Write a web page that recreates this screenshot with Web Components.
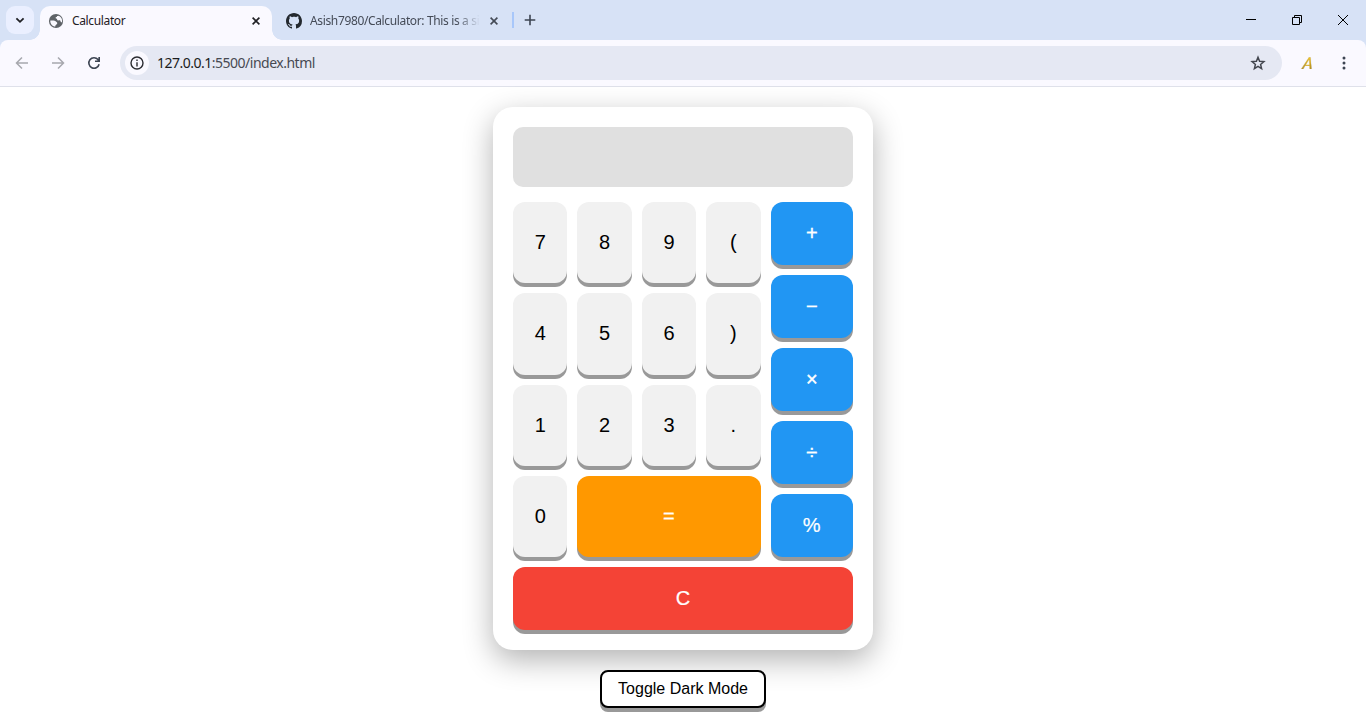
<!DOCTYPE html>
<html lang="en">
<head>
<meta charset="utf-8">
<title>Calculator</title>
<style>
html,body{margin:0;height:100%;background:#fff;overflow:hidden}
</style>
</head>
<body>
<app-window></app-window>
<script>
const define = (name, html) => customElements.define(name, class extends HTMLElement {
  constructor() {
    super();
    const t = document.createElement('template');
    t.innerHTML = html;
    this.attachShadow({ mode: 'open' }).append(t.content.cloneNode(true));
  }
});

define('browser-tab', `
<style>
:host{display:flex;align-items:center;box-sizing:border-box;height:34px;padding:0 10px 5px 8px;color:#444a56;font:12px/16px "Noto Sans","Open Sans",sans-serif}
:host([active]){position:relative;height:34px;background:#faf9ff;border-radius:10px 10px 0 0;color:#1f2024}
:host([active])::before,:host([active])::after{content:"";position:absolute;bottom:0;width:10px;height:10px}
:host([active])::before{left:-10px;background:radial-gradient(circle at 0 0,transparent 9.5px,#faf9ff 10px)}
:host([active])::after{right:-10px;background:radial-gradient(circle at 100% 0,transparent 9.5px,#faf9ff 10px)}
.icon{display:flex;width:16px;height:16px;flex:none}
.title{flex:1;min-width:0;margin-left:8px;white-space:nowrap;overflow:hidden;letter-spacing:var(--track,0)}
:host(:not([active])) .title{-webkit-mask-image:linear-gradient(90deg,#000 calc(100% - 24px),transparent);mask-image:linear-gradient(90deg,#000 calc(100% - 24px),transparent)}
.x{flex:none;width:12px;height:12px;margin-left:8px}
</style>
<span class="icon"><slot name="icon"></slot></span><span class="title"><slot></slot></span>
<svg class="x" viewBox="0 0 12 12"><path d="M2.600 2.600l6.800 6.800M9.400 2.600L2.600 9.400" stroke="currentColor" stroke-width="1.600"/></svg>`);

define('tab-strip', `
<style>
:host{display:flex;align-items:flex-end;height:40px;background:#d7e2f6}
.menu{display:flex;align-items:center;justify-content:center;width:28px;height:28px;margin:0 6px 6px;border-radius:9px;background:#eaefff}
browser-tab{width:232px;box-sizing:border-box}
.second{width:240px;padding-left:14px;padding-right:12px}
.sep{width:2px;height:16px;background:#a8c7fa;margin:0 0 12px}
.plus{width:12px;height:12px;margin:0 0 14px 10px}
.controls{display:flex;margin-left:auto;height:40px}
.controls svg{width:46px;height:40px;fill:none;stroke:#000;stroke-width:1}
svg{display:block}
</style>
<div class="menu"><svg width="12" height="12" viewBox="0 0 12 12"><path d="M2.400 4.300L6 7.800l3.600-3.500" fill="none" stroke="#1f2024" stroke-width="1.800"/></svg></div>
<browser-tab active style="--track:-.36px"><svg slot="icon" width="16" height="16" viewBox="0 0 24 24"><circle cx="12" cy="12" r="10.600" fill="#5f6368"/><path d="M3.500 11.200l5 .2c2.100 0 3 1.500 4.300 2 1.600.7 1.300 2.700.4 3.400-.9.8-2.200.8-2.300 3.600C6.600 20 3 16 3.500 11.200z" fill="#faf9ff"/><path d="M15.200 4.200c-.2 1.400-1.200 1.700-2.800 1.700-1.200 0-1.300 1.800-.2 2.200 1.700.5 1.300 2 2.200 2.800 1.200 1.100 2.800-.7 3.900.5.8.8.4 2 1.200 2.500H21c1.100-4.500-1.700-8.800-5.800-9.700z" fill="#faf9ff"/></svg>Calculator</browser-tab>
<browser-tab class="second" style="--track:-.36px"><svg slot="icon" width="16" height="16" viewBox="0 0 16 16"><path fill="#24292f" d="M8 0C3.580 0 0 3.580 0 8c0 3.540 2.290 6.530 5.470 7.590.4.070.550-.170.550-.380 0-.190-.010-.820-.010-1.490-2.010.370-2.530-.490-2.690-.940-.090-.230-.480-.940-.820-1.130-.280-.150-.680-.520-.010-.530.630-.010 1.080.580 1.230.820.720 1.210 1.870.870 2.330.660.070-.520.280-.870.510-1.070-1.780-.2-3.640-.890-3.640-3.950 0-.870.310-1.590.820-2.150-.080-.2-.360-1.020.080-2.120 0 0 .670-.210 2.200.820.640-.180 1.320-.270 2-.270s1.360.090 2 .270c1.530-1.040 2.200-.820 2.200-.820.440 1.100.160 1.920.080 2.120.510.560.820 1.270.820 2.150 0 3.070-1.870 3.750-3.650 3.950.290.250.540.730.540 1.480 0 1.070-.010 1.930-.010 2.200 0 .210.150.460.550.380A8.010 8.010 0 0 0 16 8c0-4.420-3.580-8-8-8z"/></svg>Asish7980/Calculator: This is a simple</browser-tab>
<div class="sep"></div>
<svg class="plus" viewBox="0 0 12 12"><path d="M6 .7v10.600M.7 6h10.600" stroke="#3c4452" stroke-width="1.600"/></svg>
<div class="controls">
<svg viewBox="0 0 46 40"><path d="M18 19.500h10"/></svg>
<svg viewBox="0 0 46 40"><path d="M18.500 17.500h7v7h-7zM20.500 17.500v-2h7v7h-2"/></svg>
<svg viewBox="0 0 46 40"><path d="M18 15l10 10M28 15L18 25"/></svg>
</div>`);

define('tool-bar', `
<style>
:host{display:block;background:#d7e2f6;font-family:"Noto Sans","Open Sans",sans-serif}
.bar{display:flex;align-items:center;box-sizing:border-box;height:47px;background:#faf9ff;border-bottom:1px solid #dfe1ea;border-radius:8px 8px 0 0;padding:0 14px}
svg{display:block;flex:none}
.nav{display:flex;gap:20px}
.url{display:flex;align-items:center;flex:1;height:34px;border-radius:17px;background:#e5e8f3;margin:0 17px 0 18px;padding:0 16px 0 5px;box-sizing:border-box}
.info{display:flex;align-items:center;justify-content:center;width:24px;height:24px;border-radius:50%;background:#faf9ff}
.text{flex:1;margin-left:8px;font-size:14px;line-height:20px;letter-spacing:-.5px;color:#474a52}
.text b{font-weight:400;color:#1b1c20}
.ext{width:16px;margin-left:1px;font:italic 400 16px/18px Lato,sans-serif;color:transparent;background:linear-gradient(100deg,#6f6033 10%,#f4c51c 50%,#8a6d24 90%);-webkit-background-clip:text;background-clip:text;-webkit-text-stroke:.2px #a8862b;text-align:center;transform:skewX(-9deg)}
.more{margin-left:20px}
</style>
<div class="bar">
<div class="nav">
<svg width="16" height="16" viewBox="0 0 16 16" fill="none" stroke="#a7a8ae" stroke-width="1.500"><path d="M14 8H3M8 2.500L2.500 8 8 13.500"/></svg>
<svg width="16" height="16" viewBox="0 0 16 16" fill="none" stroke="#a7a8ae" stroke-width="1.500"><path d="M2 8h11M8 2.500L13.500 8 8 13.500"/></svg>
<svg width="16" height="16" viewBox="0 0 16 16" fill="none" stroke="#3c4452" stroke-width="1.600"><path d="M13.100 9.200A5.200 5.200 0 1 1 12 4.600L13 5.700M13.200 2v4.300H9"/></svg>
</div>
<div class="url"><span class="info"><svg width="14" height="14" viewBox="0 0 14 14"><circle cx="7" cy="7" r="6" fill="none" stroke="#2b2c31" stroke-width="1.400"/><path d="M7 6.200v4.200M7 3.600v1.500" stroke="#2b2c31" stroke-width="1.400"/></svg></span>
<span class="text"><b>127.0.0.1</b>:5500/index.html</span>
<svg width="16" height="16" viewBox="0 0 16 16"><path d="M8 2.200l1.600 4 4.300.4-3.300 2.800 1 4.200L8 11.400l-3.600 2.200 1-4.200-3.300-2.800 4.300-.4z" fill="none" stroke="#43464e" stroke-width="1.500"/></svg></div>
<span class="ext">A</span>
<svg class="more" width="16" height="16" viewBox="0 0 16 16" fill="#3c4452"><circle cx="8" cy="3" r="1.500"/><circle cx="8" cy="8" r="1.500"/><circle cx="8" cy="13" r="1.500"/></svg>
</div>`);

define('calc-key', `
<style>
:host{display:flex;min-width:0;min-height:0}
button{flex:1;min-width:0;margin:0;padding:20px 0;border:0;border-radius:12px;background:var(--key,#f1f1f1);color:var(--ink,#000);box-shadow:0 4px #999;font:20px/23px "Liberation Sans",Arial,sans-serif;-webkit-text-stroke:var(--heft,0) currentColor}
</style><button><slot></slot></button>`);

define('calc-pad', `
<style>
:host{display:block;box-sizing:border-box;width:380px;padding:20px;border-radius:20px;background:#fff;box-shadow:0 10px 30px rgba(0,0,0,.3)}
.display{height:60px;border-radius:10px;background:#e0e0e0;margin-bottom:15px}
.pad{display:grid;grid-template-columns:3fr 1fr;gap:10px}
.numbers{display:grid;grid-template-columns:repeat(4,1fr);grid-template-rows:repeat(4,1fr);gap:10px}
.ops{display:grid;gap:10px;--key:#2196f3;--ink:#fff;--heft:.4px}
.ops .thin{--heft:.2px}
.ops calc-key,.clear{height:63px}
.eq{grid-column:span 3;--key:#ff9800;--ink:#fff;--heft:.3px}
.clear{grid-column:span 2;--key:#f44336;--ink:#fff;--heft:.2px}
</style>
<div class="display"></div>
<div class="pad">
<div class="numbers"><calc-key>7</calc-key><calc-key>8</calc-key><calc-key>9</calc-key><calc-key>(</calc-key><calc-key>4</calc-key><calc-key>5</calc-key><calc-key>6</calc-key><calc-key>)</calc-key><calc-key>1</calc-key><calc-key>2</calc-key><calc-key>3</calc-key><calc-key>.</calc-key><calc-key>0</calc-key><calc-key class="eq">=</calc-key></div>
<div class="ops"><calc-key>+</calc-key><calc-key>−</calc-key><calc-key>×</calc-key><calc-key>÷</calc-key><calc-key class="thin">%</calc-key></div>
<calc-key class="clear">C</calc-key>
</div>`);

define('mode-toggle', `
<style>
:host{display:block}
button{display:block;box-sizing:border-box;width:166px;height:38px;margin:0;padding:0;border:2px solid #000;border-radius:8px;background:#fff;color:#000;box-shadow:0 4px #999;font:16px/18px "Liberation Sans",Arial,sans-serif;white-space:nowrap}
</style><button><slot></slot></button>`);

define('app-window', `
<style>
:host{display:flex;flex-direction:column;height:727px}
main{display:flex;flex-direction:column;align-items:center;gap:20px;padding-top:20px}
</style>
<tab-strip></tab-strip><tool-bar></tool-bar>
<main><calc-pad></calc-pad><mode-toggle>Toggle Dark Mode</mode-toggle></main>`);
</script>
</body>
</html>
